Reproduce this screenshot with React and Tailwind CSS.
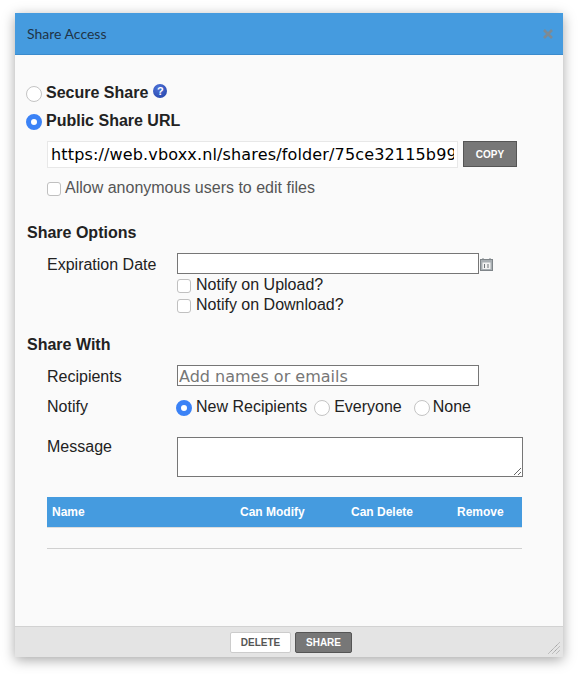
import React from 'react';

const inputClass = "bg-white border border-[#767676] outline-none";

function Radio({ checked, name }) {
  return (
    <input
      type="radio"
      name={name}
      defaultChecked={checked}
      className="appearance-none w-4 h-4 mt-1 shrink-0 rounded-full bg-white border border-[#c4c4c4] checked:border-[5px] checked:border-[#3b82f6]"
    />
  );
}

function Check({ className = "mt-1" }) {
  return <input type="checkbox" className={`appearance-none w-[14px] h-[14px] shrink-0 rounded-[3px] bg-white border border-[#c0c0c0] ${className}`} />;
}

function Field({ label, children, className = "", labelClass = "" }) {
  return (
    <div className={`flex pl-5 ${className}`}>
      <div className={`w-[130px] shrink-0 h-5 leading-5 text-[#222] ${labelClass}`}>{label}</div>
      {children}
    </div>
  );
}

export default function App() {
  return (
    <div className="w-[578px] h-[674px] bg-white pt-[13px] pl-[15px] font-['Liberation_Sans',sans-serif] text-base text-[#222]">
      <div className="w-[548px] h-[644px] flex flex-col bg-[#fafafa] shadow-[0_3px_12px_rgba(0,0,0,0.35)]">
        {/* header */}
        <div className="h-[42px] shrink-0 flex items-center justify-between pl-3 pr-[10px] bg-[#459bdf] border-b border-[#3a8bcd]">
          <span className="font-['Lato',sans-serif] text-sm text-[#1f3447]">Share Access</span>
          <svg width="10" height="10" viewBox="0 0 10 10" className="text-[#7d8a94]">
            <path d="M1 1l8 8M9 1l-8 8" stroke="currentColor" strokeWidth="2.6" />
          </svg>
        </div>

        {/* body */}
        <div className="flex-1 flex flex-col pt-[23px] pl-3">
          <div className="h-7 flex items-center -ml-px gap-1">
            <Radio name="mode" />
            <span className="font-bold mt-[2px]">Secure Share</span>
            <span className="ml-px -mt-[3px] w-[14px] h-[14px] rounded-full bg-[radial-gradient(circle_at_40%_30%,#4f73d8,#1f3fa6)] text-white text-[11px] font-bold leading-[14px] text-center">?</span>
          </div>
          <div className="h-7 flex items-center -ml-px gap-1">
            <Radio name="mode" checked />
            <span className="font-bold mt-[2px]">Public Share URL</span>
          </div>

          <div className="mt-[7px] pl-5 flex gap-[5px]">
            <input
              readOnly
              value="https://web.vboxx.nl/shares/folder/75ce32115b9921ab"
              className="w-[411px] h-[27px] bg-white border border-[#e8e8e8] px-[3px] font-['DejaVu_Sans',sans-serif] text-base tracking-[0.15px] text-black outline-none"
            />
            <button className="w-[54px] h-[26px] bg-[#777] border border-[#555] text-white text-[10px] font-bold">COPY</button>
          </div>
          <label className="mt-[10px] pl-5 h-5 flex items-center gap-1 text-[#555]">
            <Check className="mt-[2px]" />
            Allow anonymous users to edit files
          </label>

          <h2 className="mt-[25px] h-5 leading-5 font-bold">Share Options</h2>
          <Field label="Expiration Date" className="mt-[10px]" labelClass="pt-[2px]">
            <div className="flex flex-col">
              <div className="flex items-start">
                <input className={`${inputClass} w-[302px] h-[21px]`} />
                <svg width="13" height="13" viewBox="0 0 13 13" className="ml-px mt-[5px]">
                  <rect x="0.5" y="1.5" width="12" height="11" fill="#a9afb3" stroke="#7f8589" />
                  <rect x="2.5" y="4.5" width="8" height="6.5" fill="#f2f2f2" />
                  <path d="M4.5 6v4M8 6v4" stroke="#6f7579" />
                  <path d="M3 0v2M10 0v2" stroke="#7f8589" />
                </svg>
              </div>
              <label className="h-5 flex items-center gap-[5px]"><Check /><span className="mt-[2px]">Notify on Upload?</span></label>
              <label className="h-5 flex items-center gap-[5px]"><Check /><span className="mt-[2px]">Notify on Download?</span></label>
            </div>
          </Field>

          <h2 className="mt-[21px] h-5 leading-5 font-bold">Share With</h2>
          <Field label="Recipients" className="mt-[10px]" labelClass="pt-[2px]">
            <input
              placeholder="Add names or emails"
              className={`${inputClass} w-[302px] h-[21px] px-px pt-[2px] font-['DejaVu_Sans',sans-serif] text-base placeholder:text-[#777]`}
            />
          </Field>
          <Field label="Notify" className="mt-[10px]" labelClass="pt-px">
            <div className="flex items-center h-5 -ml-px">
              <Radio name="notify" checked />
              <span className="ml-1 mt-[2px]">New Recipients</span>
              <span className="ml-[7px] flex"><Radio name="notify" /></span>
              <span className="ml-1 mt-[2px]">Everyone</span>
              <span className="ml-[12px] flex"><Radio name="notify" /></span>
              <span className="ml-[3px] mt-[2px]">None</span>
            </div>
          </Field>
          <Field label="Message" className="mt-[21px]">
            <textarea className={`${inputClass} w-[346px] h-10 block`} />
          </Field>

          <div className="ml-5 mt-5 w-[475px]">
            <div className="h-[31px] flex items-center pl-[5px] bg-[#459bdf] border-b border-[#ddd] text-white text-xs font-bold">
              <span className="w-[188px]">Name</span>
              <span className="w-[111px]">Can Modify</span>
              <span className="w-[106px]">Can Delete</span>
              <span>Remove</span>
            </div>
            <div className="h-[21px] border-b border-[#d0d0d0]" />
          </div>
        </div>

        {/* footer */}
        <div className="relative h-[31px] shrink-0 flex justify-center gap-1 pt-[5px] pl-1 bg-[#e4e4e4] border-t border-[#d2d2d2]">
          <button className="w-[61px] h-[21px] bg-white border border-[#ccc] rounded-[2px] text-[#555] text-[10px] font-bold">DELETE</button>
          <button className="w-[57px] h-[21px] bg-[#777] border border-[#555] rounded-[2px] text-white text-[10px] font-bold">SHARE</button>
          <svg width="12" height="12" viewBox="0 0 12 12" className="absolute right-[3px] bottom-[3px]">
            <path d="M0.5 11.5L11.5 0.5M4.5 11.5L11.5 4.5M8.5 11.5L11.5 8.5" stroke="#9a9a9a" strokeDasharray="1.2 0.6" />
          </svg>
        </div>
      </div>
    </div>
  );
}
